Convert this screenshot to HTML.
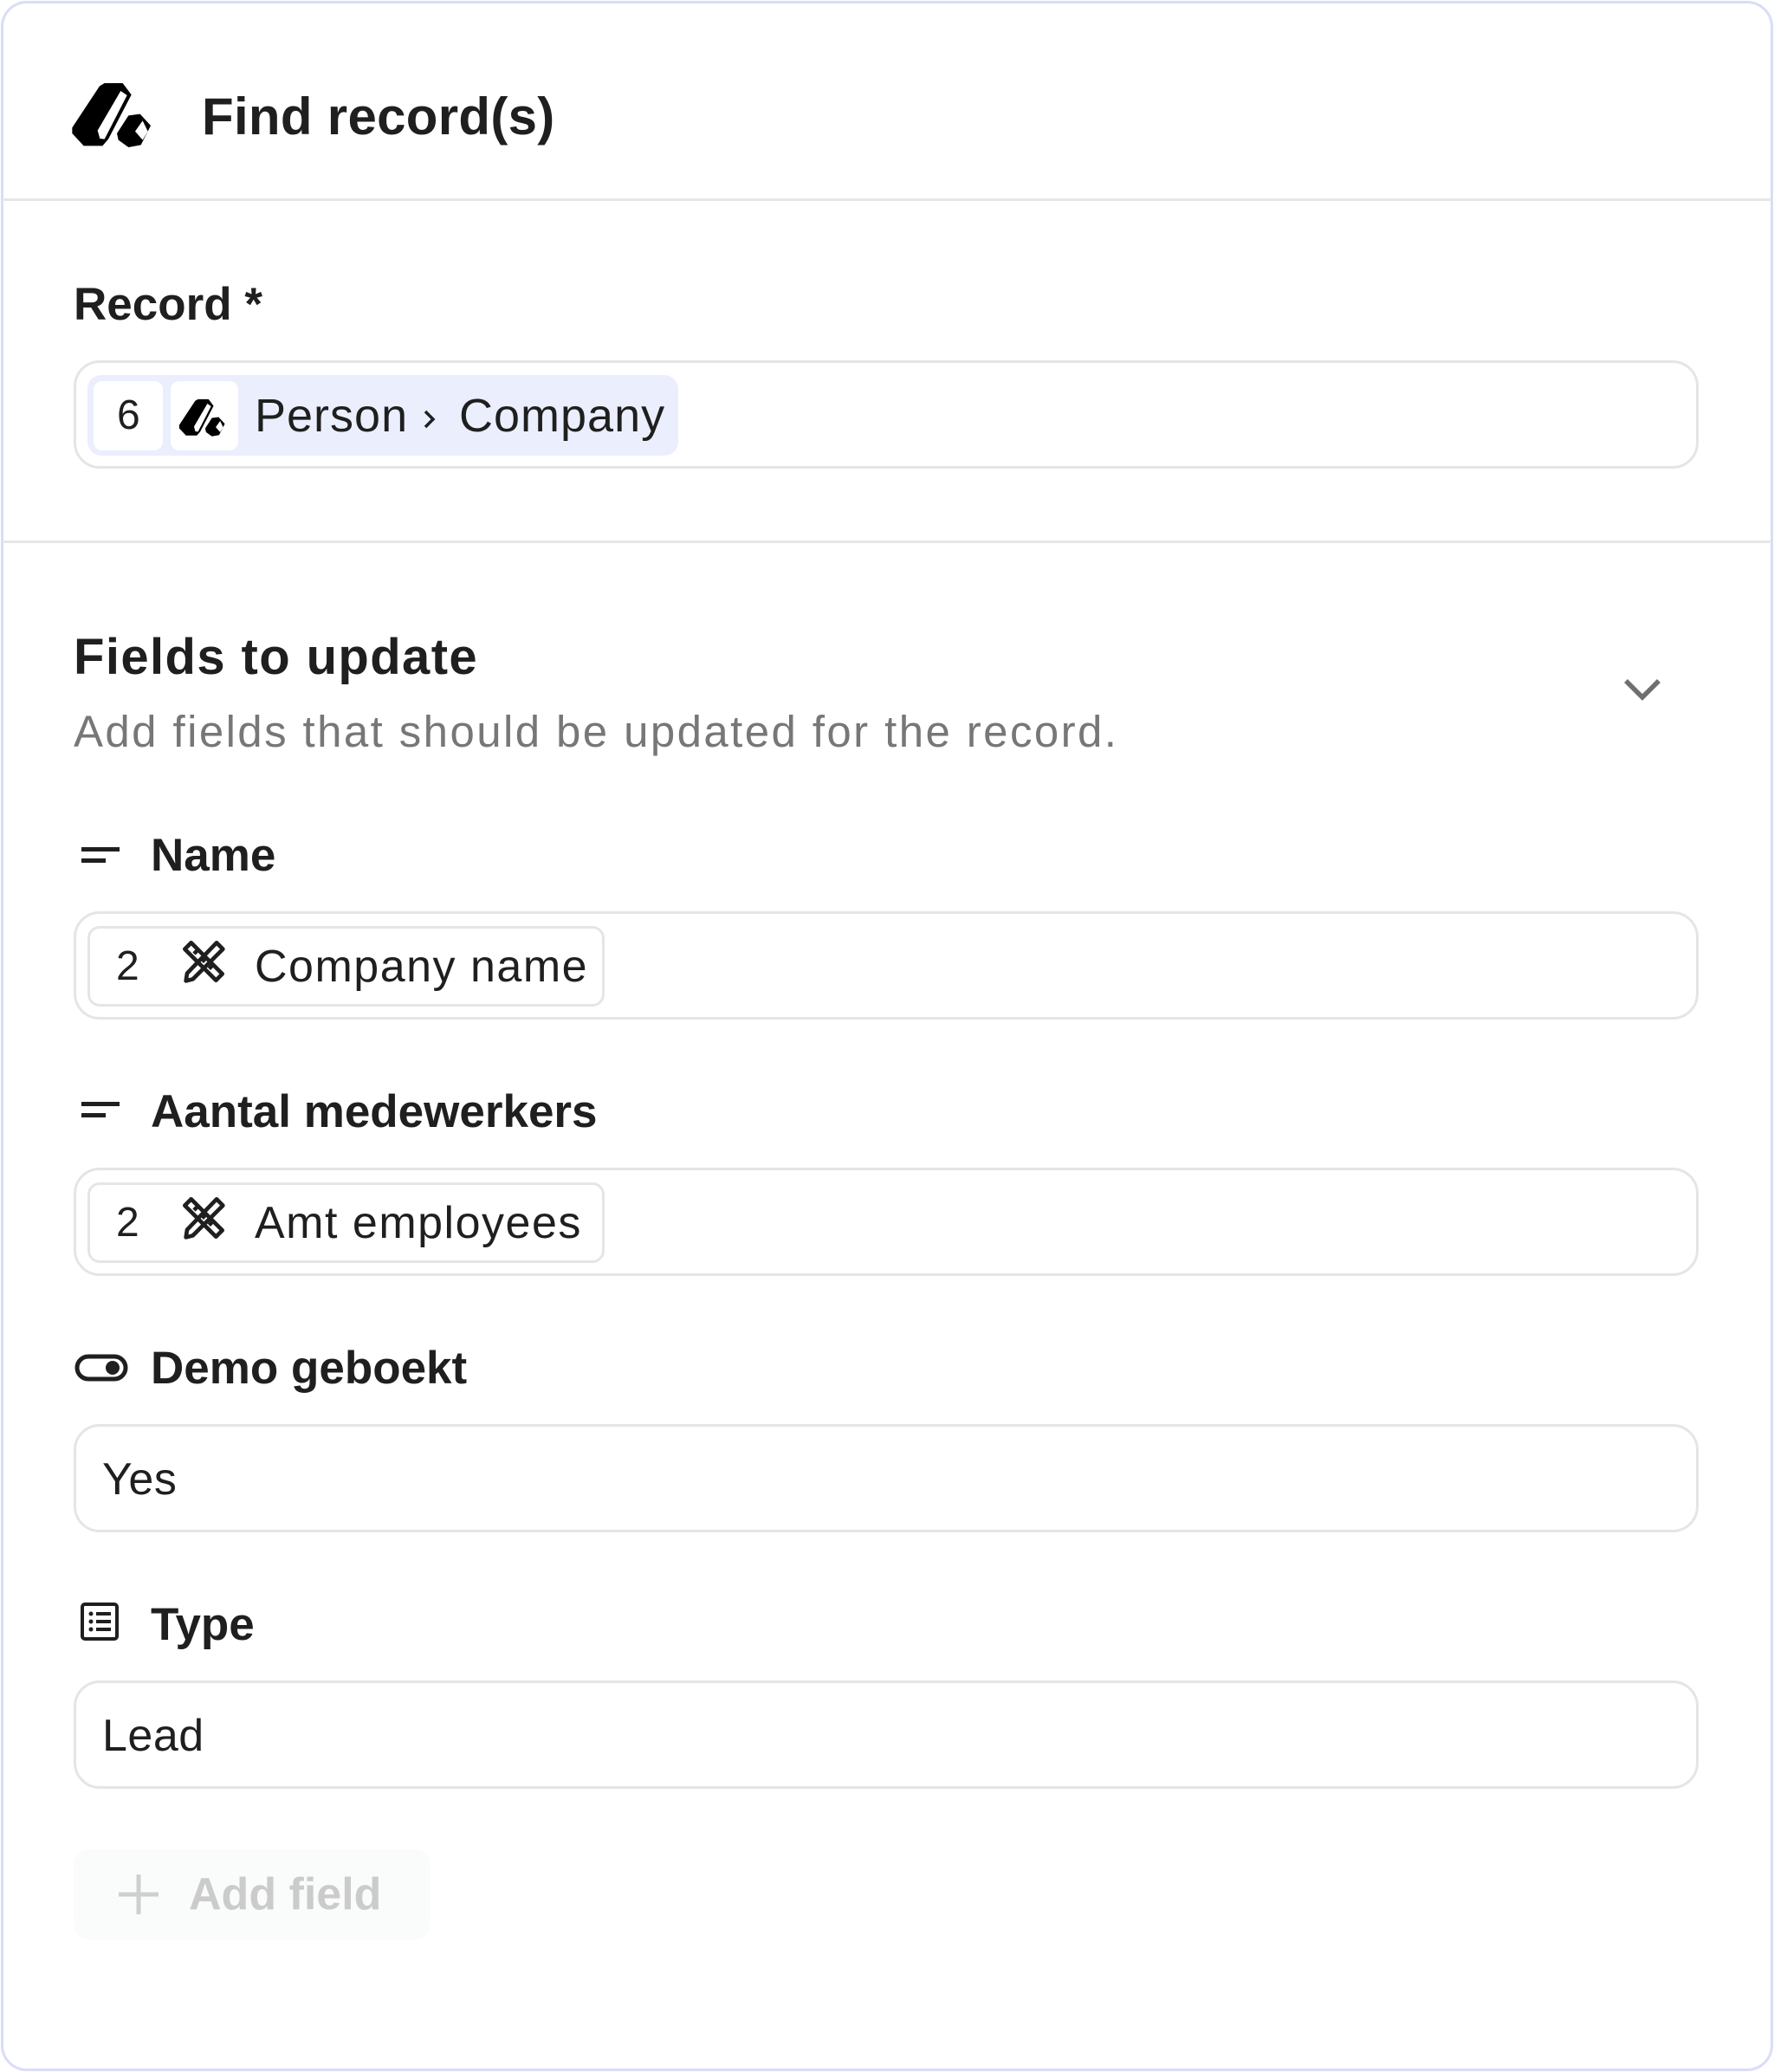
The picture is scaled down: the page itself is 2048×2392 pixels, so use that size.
<!DOCTYPE html>
<html><head><meta charset="utf-8">
<style>
*{margin:0;padding:0;box-sizing:border-box}
html,body{width:2048px;height:2392px;background:#fff;overflow:hidden}
body{font-family:"Liberation Sans",sans-serif;color:#1f1f1f;position:relative}
.card{position:absolute;left:1px;top:1px;width:2046px;height:2390px;border:3px solid #d8ddf7;border-radius:30px}
.a{position:absolute;white-space:nowrap}
.hr{position:absolute;left:3px;width:2042px;height:3px;background:#e6e6e6}
.inp{position:absolute;left:85px;width:1876px;height:125px;border:3px solid #e5e5e5;border-radius:30px}
.lbl{position:absolute;left:174px;font-size:53px;font-weight:bold;line-height:60px}
.val{position:absolute;left:118px;font-size:52px;line-height:60px;letter-spacing:0.5px}
.chip{position:absolute;left:101px;width:597px;height:93px;border:3px solid #e5e5e5;border-radius:14px;background:#fff}
.chip .n{position:absolute;left:30px;top:14px;font-size:48px;line-height:60px}
.chip .t{position:absolute;left:190px;top:14px;font-size:52px;line-height:60px;letter-spacing:1.5px}
</style></head><body>
<div class="card"></div>

<svg class="a" style="left:80px;top:90px" width="100" height="85" viewBox="0 0 300 255">
<path d="M10 172 L105 28 L122 18 L185 18 L215 58 L135 212 L115 235 L50 235 L10 192 Z" fill="#000"/>
<path d="M98 182 L178 45 L200 60 L122 212 L106 210 Z" fill="#fff"/>
<path d="M165 192 L205 130 L245 125 L282 165 L248 232 L205 240 L170 215 Z" fill="#000"/>
<path d="M228 185 L254 148 L272 185 L254 215 Z" fill="#fff"/>
</svg>
<div class="a" style="left:233px;top:100px;font-size:60px;font-weight:bold;line-height:70px;letter-spacing:0.3px">Find record(s)</div>
<div class="hr" style="top:229px"></div>

<div class="a" style="left:85px;top:322px;font-size:53px;font-weight:bold;line-height:60px">Record *</div>
<div class="inp" style="top:416px"></div>
<div class="a" style="left:101px;top:433px;width:682px;height:93px;background:#ebeefc;border-radius:16px"></div>
<div class="a" style="left:108px;top:440px;width:80px;height:80px;background:#fff;border-radius:10px"></div>
<div class="a" style="left:135px;top:450px;font-size:48px;line-height:60px">6</div>
<div class="a" style="left:197px;top:440px;width:78px;height:80px;background:#fff;border-radius:10px"></div>
<svg class="a" style="left:205px;top:457px" width="58" height="50" viewBox="0 0 300 255">
<path d="M10 172 L105 28 L122 18 L185 18 L215 58 L135 212 L115 235 L50 235 L10 192 Z" fill="#000"/>
<path d="M98 182 L178 45 L200 60 L122 212 L106 210 Z" fill="#fff"/>
<path d="M165 192 L205 130 L245 125 L282 165 L248 232 L205 240 L170 215 Z" fill="#000"/>
<path d="M228 185 L254 148 L272 185 L254 215 Z" fill="#fff"/>
</svg>
<div class="a" style="left:294px;top:450px;font-size:54px;line-height:60px;letter-spacing:1px">Person</div>
<svg class="a" style="left:486px;top:471px" width="20" height="26" viewBox="0 0 20 26"><path d="M5 4 L14 13 L5 22" fill="none" stroke="#1f1f1f" stroke-width="3.5"/></svg>
<div class="a" style="left:530px;top:450px;font-size:54px;line-height:60px;letter-spacing:1px">Company</div>

<div class="hr" style="top:624px"></div>

<div class="a" style="left:85px;top:727px;font-size:58px;font-weight:bold;line-height:64px;letter-spacing:1.4px">Fields to update</div>
<div class="a" style="left:85px;top:815px;font-size:51px;line-height:60px;color:#777;letter-spacing:2.4px">Add fields that should be updated for the record.</div>
<svg class="a" style="left:1870px;top:778px" width="52" height="38" viewBox="0 0 52 38"><path d="M7 8 L26 27 L45 8" fill="none" stroke="#6f6f6f" stroke-width="5.5"/></svg>

<!-- Name -->
<svg class="a" style="left:92px;top:975px" width="48" height="30" viewBox="0 0 48 30"><rect x="2" y="3" width="44" height="5" fill="#1f1f1f"/><rect x="2" y="16" width="28" height="5" fill="#1f1f1f"/></svg>
<div class="lbl" style="top:958px">Name</div>
<div class="inp" style="top:1052px"></div>
<div class="chip" style="top:1069px"><span class="n">2</span><span class="t">Company name</span></div>
<svg class="a" style="left:200px;top:1075px" width="70" height="70" viewBox="0 0 210 210">
<g fill="none" stroke="#1f1f1f" stroke-width="14" stroke-linejoin="round"><path d="M62 40 L170 148 L148 170 L40 62 Z"/><path d="M72 78 L84 66 M100 106 L112 94 M124 130 L136 118" /><path d="M150 40 L172 62 L68 166 L44 172 L48 146 Z"/></g></svg>

<!-- Aantal -->
<svg class="a" style="left:92px;top:1269px" width="48" height="30" viewBox="0 0 48 30"><rect x="2" y="3" width="44" height="5" fill="#1f1f1f"/><rect x="2" y="16" width="28" height="5" fill="#1f1f1f"/></svg>
<div class="lbl" style="top:1254px">Aantal medewerkers</div>
<div class="inp" style="top:1348px"></div>
<div class="chip" style="top:1365px"><span class="n">2</span><span class="t">Amt employees</span></div>
<svg class="a" style="left:200px;top:1371px" width="70" height="70" viewBox="0 0 210 210">
<g fill="none" stroke="#1f1f1f" stroke-width="14" stroke-linejoin="round"><path d="M62 40 L170 148 L148 170 L40 62 Z"/><path d="M72 78 L84 66 M100 106 L112 94 M124 130 L136 118" /><path d="M150 40 L172 62 L68 166 L44 172 L48 146 Z"/></g></svg>

<!-- Demo -->
<svg class="a" style="left:86px;top:1562px" width="62" height="34" viewBox="0 0 62 34"><rect x="3" y="4" width="56" height="26" rx="13" fill="none" stroke="#1f1f1f" stroke-width="5"/><circle cx="44" cy="17" r="8" fill="#1f1f1f"/></svg>
<div class="lbl" style="top:1550px">Demo geboekt</div>
<div class="inp" style="top:1644px"></div>
<div class="val" style="top:1678px">Yes</div>

<!-- Type -->
<svg class="a" style="left:92px;top:1849px" width="46" height="46" viewBox="0 0 46 46"><rect x="3" y="3" width="40" height="40" rx="3" fill="none" stroke="#1f1f1f" stroke-width="4"/><circle cx="13" cy="14" r="2.5" fill="#1f1f1f"/><circle cx="13" cy="23" r="2.5" fill="#1f1f1f"/><circle cx="13" cy="32" r="2.5" fill="#1f1f1f"/><rect x="19" y="12" width="17" height="4" fill="#1f1f1f"/><rect x="19" y="21" width="17" height="4" fill="#1f1f1f"/><rect x="19" y="30" width="17" height="4" fill="#1f1f1f"/></svg>
<div class="lbl" style="top:1846px">Type</div>
<div class="inp" style="top:1940px"></div>
<div class="val" style="top:1974px">Lead</div>

<!-- Add field -->
<div class="a" style="left:85px;top:2135px;width:412px;height:104px;background:#fafbfb;border-radius:18px"></div>
<svg class="a" style="left:135px;top:2162px" width="50" height="50" viewBox="0 0 50 50"><path d="M25 2 V48 M2 25 H48" stroke="#cfcfcf" stroke-width="5"/></svg>
<div class="a" style="left:218px;top:2157px;font-size:52px;font-weight:bold;line-height:60px;color:#cbcbcb">Add field</div>
</body></html>
